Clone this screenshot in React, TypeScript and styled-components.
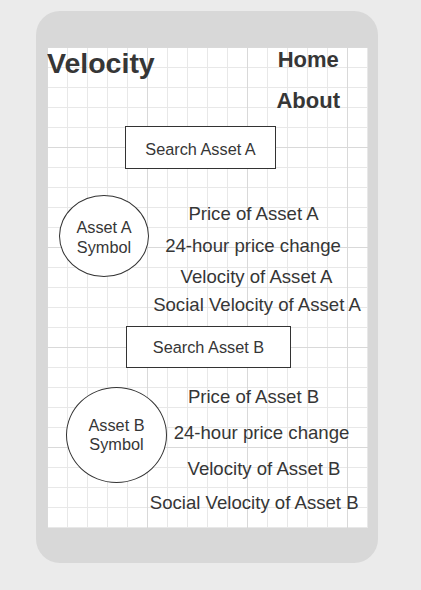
import React from "react";
import styled, { createGlobalStyle } from "styled-components";

const GlobalStyle = createGlobalStyle`
  html, body {
    margin: 0;
    padding: 0;
    background: #ebebeb;
  }
  body {
    font-family: "Liberation Sans", Arial, sans-serif;
    color: #333333;
  }
`;

const Page = styled.div`
  padding: 11px 0 0 36px;
`;

const Frame = styled.div`
  width: 342px;
  height: 552px;
  box-sizing: border-box;
  padding: 36px 10px 35px 11px;
  background: #d8d8d8;
  border-radius: 24px;
`;

const Screen = styled.div`
  width: 321px;
  height: 481px;
  overflow: hidden;
  background-color: #ffffff;
  background-image:
    linear-gradient(to right, #d9d9d9 1px, transparent 1px),
    linear-gradient(to bottom, #d9d9d9 1px, transparent 1px),
    linear-gradient(to right, #e8e8e8 1px, transparent 1px),
    linear-gradient(to bottom, #e8e8e8 1px, transparent 1px);
  background-size: 100px 100px, 100px 100px, 20px 20px, 20px 20px;
`;

const Header = styled.header`
  display: flex;
  justify-content: space-between;
  align-items: flex-start;
  height: 65px;
`;

const Logo = styled.h1`
  margin: 0;
  font-size: 28.5px;
  line-height: 32px;
  font-weight: 700;
  color: #363636;
`;

const Nav = styled.nav`
  display: flex;
  flex-direction: column;
  align-items: center;
  gap: 17px;
  padding-top: 1px;
  padding-right: 28px;
`;

const NavLink = styled.span`
  font-size: 22px;
  line-height: 24px;
  font-weight: 700;
  color: #363636;
`;

const SearchBox = styled.div<{ $mt: number; $ml: number; $w: number; $h: number; $pt: number }>`
  margin-top: ${(p) => p.$mt}px;
  margin-left: ${(p) => p.$ml}px;
  width: ${(p) => p.$w}px;
  height: ${(p) => p.$h}px;
  box-sizing: border-box;
  padding-top: ${(p) => p.$pt}px;
  border: 1px solid #333333;
  background: #ffffff;
  display: flex;
  align-items: center;
  justify-content: center;
  font-size: 16.3px;
  color: #363636;
`;

const AssetRow = styled.section<{ $mt: number }>`
  margin-top: ${(p) => p.$mt}px;
  display: flex;
  align-items: flex-start;
`;

const SymbolCircle = styled.div<{ $ml: number; $w: number; $h: number; $pt: number }>`
  flex-shrink: 0;
  margin-left: ${(p) => p.$ml}px;
  width: ${(p) => p.$w}px;
  height: ${(p) => p.$h}px;
  box-sizing: border-box;
  padding-top: ${(p) => p.$pt}px;
  border: 1px solid #333333;
  border-radius: 50%;
  background: #ffffff;
  display: flex;
  align-items: center;
  justify-content: center;
  text-align: center;
  font-size: 16.3px;
  line-height: 19.5px;
  color: #363636;
`;

const InfoColumn = styled.div`
  flex: 1;
  min-width: 0;
  display: flex;
  flex-direction: column;
`;

const InfoLine = styled.div<{ $mt: number; $shift: number }>`
  margin-top: ${(p) => p.$mt}px;
  margin-left: ${(p) => p.$shift * 2}px;
  text-align: center;
  white-space: nowrap;
  font-size: 18.6px;
  line-height: 20px;
  color: #363636;
`;

type Line = { text: string; mt: number; shift: number };

type Asset = {
  search: { mt: number; ml: number; w: number; h: number; pt: number; label: string };
  rowMt: number;
  circle: { ml: number; w: number; h: number; pt: number; l1: string; l2: string };
  lines: Line[];
};

const assets: Asset[] = [
  {
    search: { mt: 14, ml: 78, w: 151, h: 43, pt: 4, label: "Search Asset A" },
    rowMt: 26,
    circle: { ml: 12, w: 90, h: 82, pt: 3, l1: "Asset A", l2: "Symbol" },
    lines: [
      { text: "Price of Asset A", mt: 9, shift: -5 },
      { text: "24-hour price change", mt: 11.7, shift: -5.5 },
      { text: "Velocity of Asset A", mt: 11, shift: -2 },
      { text: "Social Velocity of Asset A", mt: 8, shift: -1.5 },
    ],
  },
  {
    search: { mt: 11.5, ml: 79, w: 165, h: 42, pt: 0, label: "Search Asset B" },
    rowMt: 19,
    circle: { ml: 19, w: 101, h: 96, pt: 0, l1: "Asset B", l2: "Symbol" },
    lines: [
      { text: "Price of Asset B", mt: 0, shift: -14 },
      { text: "24-hour price change", mt: 15.6, shift: -6 },
      { text: "Velocity of Asset B", mt: 16.7, shift: -3.5 },
      { text: "Social Velocity of Asset B", mt: 14, shift: -13.3 },
    ],
  },
];

export default function App() {
  return (
    <>
      <GlobalStyle />
      <Page>
        <Frame>
          <Screen>
            <Header>
              <Logo>Velocity</Logo>
              <Nav>
                <NavLink>Home</NavLink>
                <NavLink>About</NavLink>
              </Nav>
            </Header>
            {assets.map((a) => (
              <React.Fragment key={a.search.label}>
                <SearchBox
                  $mt={a.search.mt}
                  $ml={a.search.ml}
                  $w={a.search.w}
                  $h={a.search.h}
                  $pt={a.search.pt}
                >
                  {a.search.label}
                </SearchBox>
                <AssetRow $mt={a.rowMt}>
                  <SymbolCircle $ml={a.circle.ml} $w={a.circle.w} $h={a.circle.h} $pt={a.circle.pt}>
                    {a.circle.l1}
                    <br />
                    {a.circle.l2}
                  </SymbolCircle>
                  <InfoColumn>
                    {a.lines.map((l) => (
                      <InfoLine key={l.text} $mt={l.mt} $shift={l.shift}>
                        {l.text}
                      </InfoLine>
                    ))}
                  </InfoColumn>
                </AssetRow>
              </React.Fragment>
            ))}
          </Screen>
        </Frame>
      </Page>
    </>
  );
}
